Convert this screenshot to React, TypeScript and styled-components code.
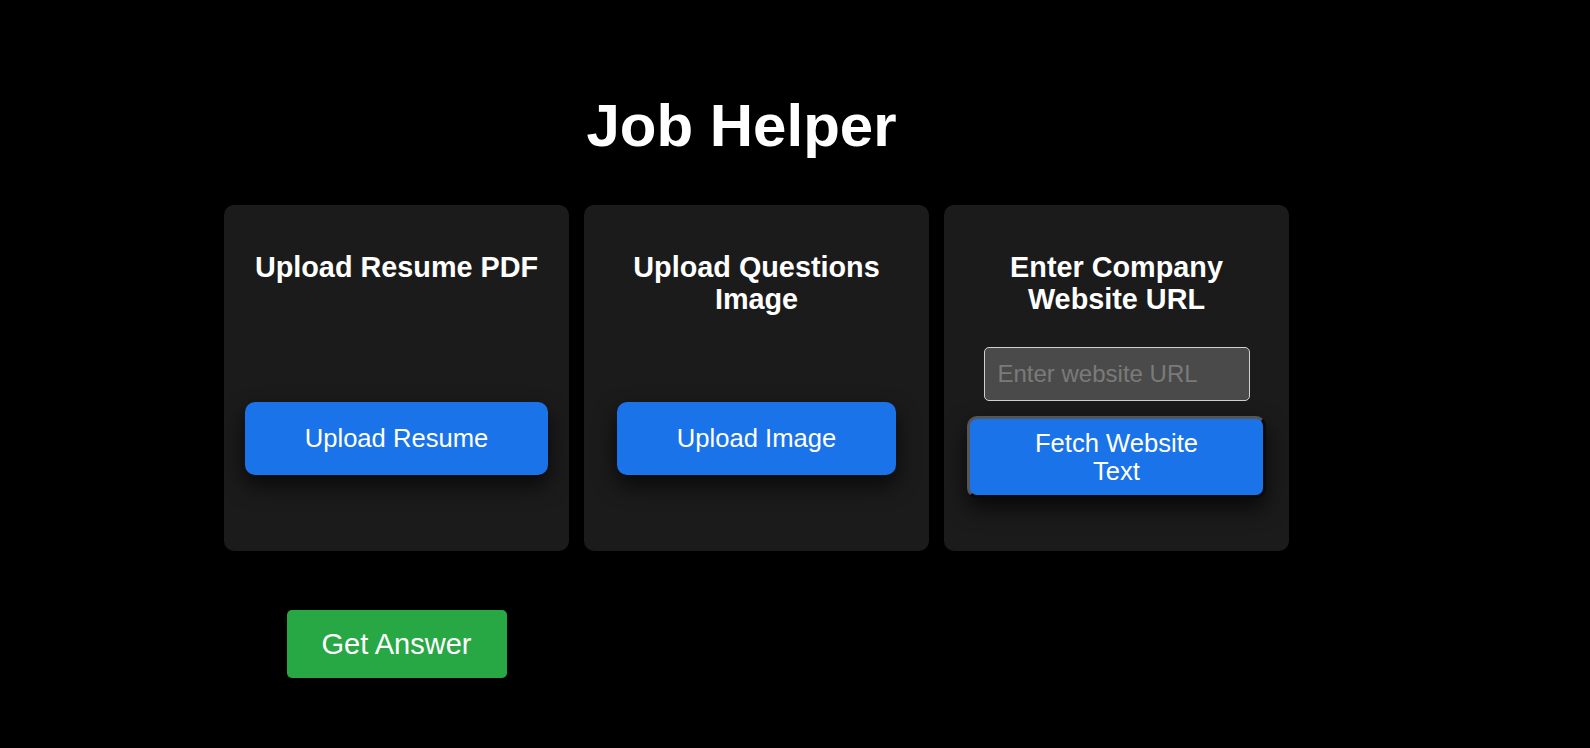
import React from "react";
import styled, { createGlobalStyle } from "styled-components";

const GlobalStyle = createGlobalStyle`
  html, body {
    margin: 0;
    padding: 0;
    background: #000;
    color: #fff;
    font-family: "Liberation Sans", Arial, sans-serif;
  }
`;

const Page = styled.main`
  min-height: 748px;
  box-sizing: border-box;
  padding: 92px 0 0 224px;
`;

const Column = styled.div`
  width: 1035px;
  display: flex;
  flex-direction: column;
`;

const Title = styled.h1`
  margin: 0 0 46px;
  font-size: 60px;
  font-weight: 700;
  line-height: 67px;
  text-align: center;
`;

const CardRow = styled.div`
  display: flex;
  gap: 15px;
`;

const Card = styled.section`
  flex: 0 0 345px;
  height: 346px;
  box-sizing: border-box;
  padding: 46px 20px 0;
  background: #1b1b1b;
  border-radius: 10px;
  display: flex;
  flex-direction: column;
  align-items: center;
`;

const CardTitle = styled.h2`
  margin: 0;
  font-size: 28.8px;
  font-weight: 700;
  line-height: 32px;
  text-align: center;
`;

const UploadButton = styled.button`
  margin-top: auto;
  margin-bottom: 76px;
  height: 73px;
  padding: 0 60px;
  border: none;
  border-radius: 10px;
  background: #1a73e8;
  color: #fff;
  font-family: inherit;
  font-size: 25.6px;
  box-shadow: 0 10px 22px rgba(0, 0, 0, 0.7);
  cursor: pointer;
`;

const UrlInput = styled.input`
  margin-top: 32px;
  width: 266px;
  height: 54px;
  box-sizing: border-box;
  padding: 0 13px;
  border: 1px solid #d0d0d0;
  border-radius: 5px;
  background: #4a4a4a;
  color: #fff;
  font-family: inherit;
  font-size: 24px;
  outline: none;

  &::placeholder {
    color: #7a7a7a;
  }
`;

const FetchButton = styled.button`
  margin-top: 15px;
  width: 299px;
  height: 82px;
  box-sizing: border-box;
  padding: 0 60px;
  border: 3px solid;
  border-color: #565656 #0a0a0a #0a0a0a #565656;
  border-radius: 10px;
  background: #1a73e8;
  color: #fff;
  font-family: inherit;
  font-size: 25.6px;
  line-height: 28px;
  box-shadow: 0 10px 22px rgba(0, 0, 0, 0.7);
  cursor: pointer;
`;

const Footer = styled.div`
  width: 345px;
  margin-top: 59px;
  display: flex;
  justify-content: center;
`;

const AnswerButton = styled.button`
  width: 220px;
  height: 68px;
  border: none;
  border-radius: 5px;
  background: #28a745;
  color: #fff;
  font-family: inherit;
  font-size: 29px;
  cursor: pointer;
`;

export default function App() {
  return (
    <>
      <GlobalStyle />
      <Page>
        <Column>
          <Title>Job Helper</Title>
          <CardRow>
            <Card>
              <CardTitle>Upload Resume PDF</CardTitle>
              <UploadButton>Upload Resume</UploadButton>
            </Card>
            <Card>
              <CardTitle>Upload Questions Image</CardTitle>
              <UploadButton>Upload Image</UploadButton>
            </Card>
            <Card>
              <CardTitle>Enter Company Website URL</CardTitle>
              <UrlInput placeholder="Enter website URL" />
              <FetchButton>Fetch Website Text</FetchButton>
            </Card>
          </CardRow>
          <Footer>
            <AnswerButton>Get Answer</AnswerButton>
          </Footer>
        </Column>
      </Page>
    </>
  );
}
